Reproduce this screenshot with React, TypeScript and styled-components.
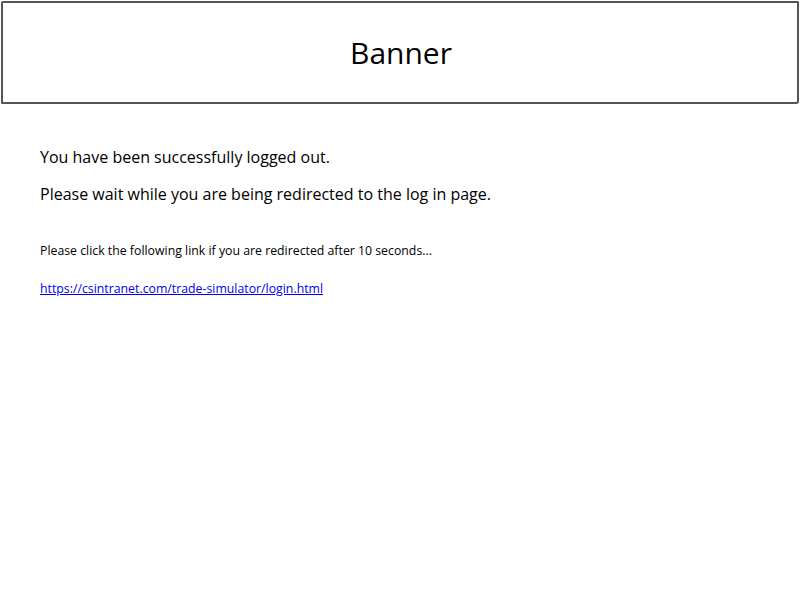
import React from "react";
import styled, { createGlobalStyle } from "styled-components";

const Global = createGlobalStyle`
  html, body { margin: 0; padding: 0; background: #fff; }
  body { font-family: "Comic Sans MS", "Open Sans", "DejaVu Sans", sans-serif; color: #000; }
`;

const Page = styled.div`
  width: 800px;
  height: 600px;
  display: flex;
  flex-direction: column;
  box-sizing: border-box;
`;

const Banner = styled.header`
  margin: 1px 1px 0 1px;
  height: 103px;
  box-sizing: border-box;
  border: 2px solid #555;
  border-radius: 2px 1px 3px 1px;
  display: flex;
  align-items: center;
  justify-content: center;
`;

const BannerTitle = styled.h1`
  margin: 0 0 0 2px;
  font-size: 30px;
  font-weight: normal;
  letter-spacing: 0;
`;

const Content = styled.main`
  padding: 42px 0 0 40px;
  display: flex;
  flex-direction: column;
`;

const Message = styled.p<{ $gap?: number }>`
  margin: 0 0 ${(p) => p.$gap ?? 0}px 0;
  font-size: 16px;
  line-height: 22px;
`;

const Note = styled.p<{ $gap?: number }>`
  margin: 0 0 ${(p) => p.$gap ?? 0}px 0;
  font-size: 12.3px;
  line-height: 16px;
`;

const Link = styled.a`
  font-size: 12.3px;
  line-height: 16px;
  color: #0000ee;
  text-decoration: underline;
  align-self: flex-start;
`;

export default function App() {
  return (
    <>
      <Global />
      <Page>
        <Banner>
          <BannerTitle>Banner</BannerTitle>
        </Banner>
        <Content>
          <Message $gap={15}>You have been successfully logged out.</Message>
          <Message $gap={38}>Please wait while you are being redirected to the log in page.</Message>
          <Note $gap={22}>Please click the following link if you are redirected after 10 seconds...</Note>
          <Link href="https://csintranet.com/trade-simulator/login.html">
            https://csintranet.com/trade-simulator/login.html
          </Link>
        </Content>
      </Page>
    </>
  );
}
